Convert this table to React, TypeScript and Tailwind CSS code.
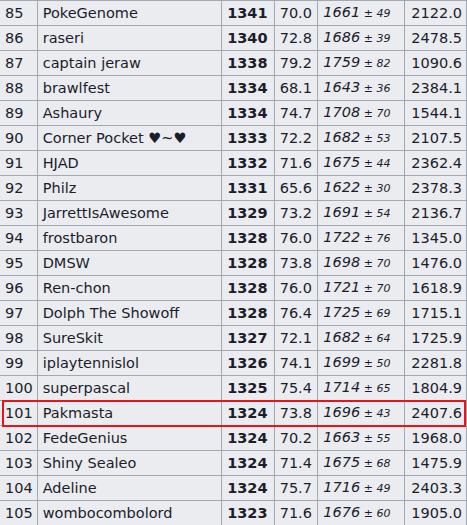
type Row = [number, string, number, string, number, number, string];

const rows: Row[] = [
    [85, "PokeGenome", 1341, "70.0", 1661, 49, "2122.0"],
    [86, "raseri", 1340, "72.8", 1686, 39, "2478.5"],
    [87, "captain jeraw", 1338, "79.2", 1759, 82, "1090.6"],
    [88, "brawlfest", 1334, "68.1", 1643, 36, "2384.1"],
    [89, "Ashaury", 1334, "74.7", 1708, 70, "1544.1"],
    [90, "Corner Pocket ♥~♥", 1333, "72.2", 1682, 53, "2107.5"],
    [91, "HJAD", 1332, "71.6", 1675, 44, "2362.4"],
    [92, "Philz", 1331, "65.6", 1622, 30, "2378.3"],
    [93, "JarrettIsAwesome", 1329, "73.2", 1691, 54, "2136.7"],
    [94, "frostbaron", 1328, "76.0", 1722, 76, "1345.0"],
    [95, "DMSW", 1328, "73.8", 1698, 70, "1476.0"],
    [96, "Ren-chon", 1328, "76.0", 1721, 70, "1618.9"],
    [97, "Dolph The Showoff", 1328, "76.4", 1725, 69, "1715.1"],
    [98, "SureSkit", 1327, "72.1", 1682, 64, "1725.9"],
    [99, "iplaytennislol", 1326, "74.1", 1699, 50, "2281.8"],
    [100, "superpascal", 1325, "75.4", 1714, 65, "1804.9"],
    [101, "Pakmasta", 1324, "73.8", 1696, 43, "2407.6"],
    [102, "FedeGenius", 1324, "70.2", 1663, 55, "1968.0"],
    [103, "Shiny Sealeo", 1324, "71.4", 1675, 68, "1475.9"],
    [104, "Adeline", 1324, "75.7", 1716, 49, "2403.3"],
    [105, "wombocombolord", 1323, "71.6", 1676, 60, "1905.0"],
];

const cell = "border border-[#a2a9b1] h-[25px] p-0 pl-[5px] align-middle whitespace-nowrap";

export default function App() {
    return (
        <div className="w-[467px] h-[525px] overflow-hidden bg-white">
            <div className="relative ml-[-1px]">
                <table
                    className="border-collapse bg-[#eaecf0] text-[#1b1d2a] text-[14.5px] leading-[18px] table-fixed"
                    style={{ fontFamily: '"DejaVu Sans", Verdana, sans-serif' }}
                >
                    <colgroup>
                        <col className="w-[38px]" />
                        <col className="w-[187px]" />
                        <col className="w-[53px]" />
                        <col className="w-[44px]" />
                        <col className="w-[88px]" />
                        <col className="w-[62px]" />
                    </colgroup>
                    <tbody>
                        {rows.map(([rank, name, elo, gxe, glicko, dev, coil]) => (
                            <tr key={rank}>
                                <td className={cell}>{rank}</td>
                                <td className={cell}>{name}</td>
                                <td className={`${cell} font-bold`}>{elo}</td>
                                <td className={cell}>{gxe}</td>
                                <td className={cell}>
                                    <em>{glicko}</em>
                                    <span className="text-[11px]">
                                        {" ± "}
                                        <em>{dev}</em>
                                    </span>
                                </td>
                                <td className={`${cell} pl-[6px]`}>{coil}</td>
                            </tr>
                        ))}
                    </tbody>
                </table>
                {/* highlighted row */}
                <div className="absolute left-[3px] top-[400px] w-[464px] h-[27px] border-2 border-[#e8141c] pointer-events-none" />
            </div>
        </div>
    );
}
